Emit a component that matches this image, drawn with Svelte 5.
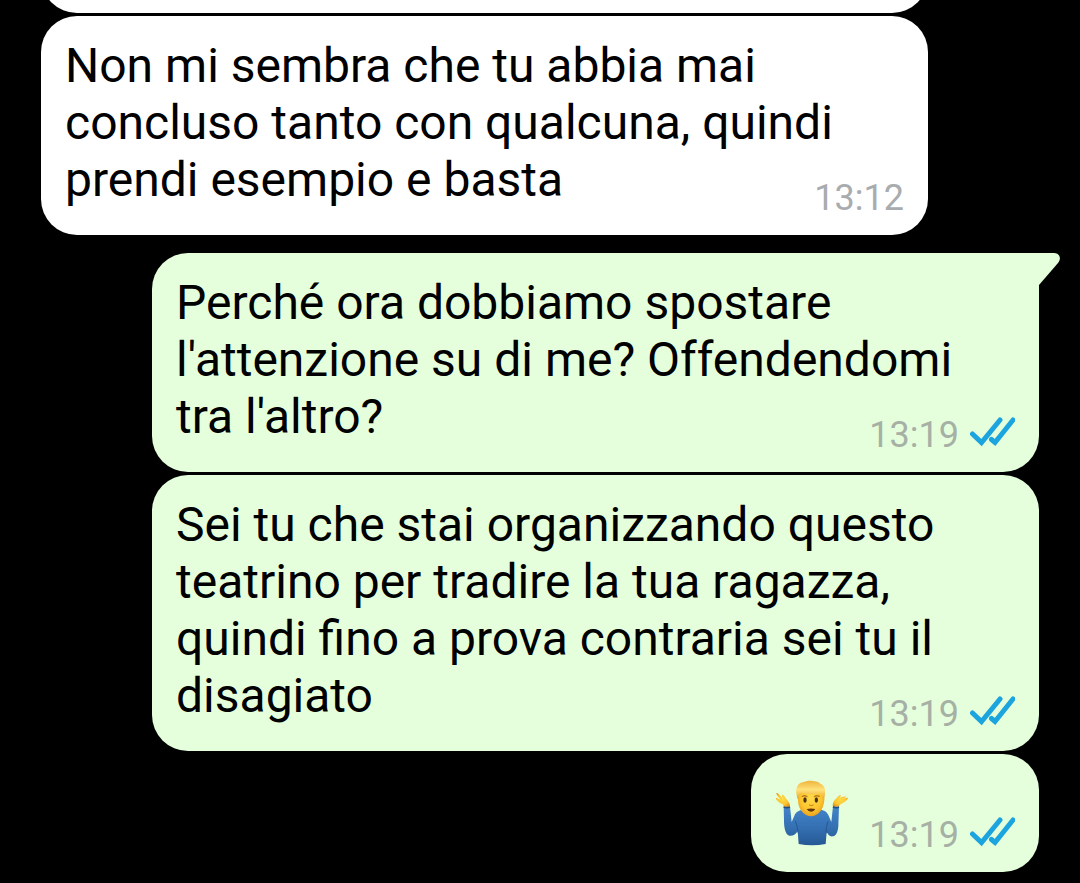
<script lang="ts">
    type Message = {
        text: string;
        time: string;
        mine: boolean;
        tail?: boolean;
        shrug?: boolean;
    };

    const messages: Message[] = [
        {
            text: "Non mi sembra che tu abbia mai concluso tanto con qualcuna, quindi prendi esempio e basta",
            time: "13:12",
            mine: false,
        },
        {
            text: "Perché ora dobbiamo spostare l'attenzione su di me? Offendendomi tra l'altro?",
            time: "13:19",
            mine: true,
            tail: true,
        },
        {
            text: "Sei tu che stai organizzando questo teatrino per tradire la tua ragazza, quindi fino a prova contraria sei tu il disagiato",
            time: "13:19",
            mine: true,
        },
        { text: "", time: "13:19", mine: true, shrug: true },
    ];
</script>

{#snippet meta(message: Message)}
    <span class="meta">
        <time>{message.time}</time>
        {#if message.mine}
            <svg class="ticks" viewBox="0 0 45 30" role="img" aria-label="Letto">
                <path d="M2.5 17L11.5 25.5L30 3M21.5 22.5L25 25.5L43 3" />
            </svg>
        {/if}
    </span>
{/snippet}

<main class="chat">
    <div class="previous">
        <div class="bubble"></div>
    </div>
    {#each messages as message}
        <article
            class="bubble"
            class:mine={message.mine}
            class:tailed={message.tail}
            class:compact={message.shrug}
        >
            {#if message.tail}
                <svg class="tail" viewBox="0 0 22 34" aria-hidden="true">
                    <path d="M0 0H15C20 0 23 5 19 10L0 32Z" />
                </svg>
            {/if}
            {#if message.shrug}
                <svg class="emoji" viewBox="42 42 222 198" role="img" aria-label="🤷‍♂️">
                    <defs>
                        <linearGradient id="shirt" x1="0" y1="0" x2="0" y2="1">
                            <stop offset="0" stop-color="#4384c9" />
                            <stop offset="0.55" stop-color="#3470b2" />
                            <stop offset="1" stop-color="#255894" />
                        </linearGradient>
                        <radialGradient id="skin" cx="0.5" cy="0.45" r="0.6">
                            <stop offset="0" stop-color="#ffdc48" />
                            <stop offset="0.65" stop-color="#fbc42d" />
                            <stop offset="1" stop-color="#e4941b" />
                        </radialGradient>
                        <linearGradient id="hair" x1="0" y1="0" x2="0" y2="1">
                            <stop offset="0" stop-color="#efb43a" />
                            <stop offset="0.5" stop-color="#ffe27a" />
                            <stop offset="1" stop-color="#e9a92e" />
                        </linearGradient>
                    </defs>
                    <path
                        fill="url(#skin)"
                        d="M68 122L66 115C57 112 50 106 45 99C43 95 47 95 52 98L58 101C52 93 46 86 46 82C48 79 53 84 58 89L66 97C63 92 61 87 64 86C69 86 72 93 76 99C82 105 86 112 87 118L86 123Z"
                    />
                    <path
                        fill="url(#skin)"
                        d="M233 122L236 116C246 112 254 107 260 99C262 95 258 94 251 97L244 98C250 95 255 94 254 92C250 90 240 93 233 98L239 91C241 87 236 87 232 91L221 102C217 107 215 114 215 121Z"
                    />
                    <path
                        fill="url(#shirt)"
                        d="M68 122Q77 126 87 122L92 168L102 145C109 134 121 131 138 130H168C185 131 197 136 202 147L211 168L216 121Q225 126 234 122L232 180C231 196 226 209 216 211C207 213 202 207 197 199L194 234Q153 242 113 234L110 196C103 207 93 211 85 209C73 205 69 186 69 164Z"
                    />
                    <path
                        fill="none"
                        stroke="#265791"
                        stroke-width="3"
                        d="M103 165Q110 182 112 202M201 166Q195 180 195 202"
                    />
                    <path
                        fill="none"
                        stroke="#244e80"
                        stroke-width="5"
                        d="M68 123Q77 127 87 123M216 122Q225 127 234 123"
                    />
                    <path
                        fill="url(#skin)"
                        d="M109 82Q109 51 151 50Q192 52 191 84L190 103C188 131 170 151 151 151C131 151 112 131 111 104Z"
                    />
                    <path
                        fill="url(#hair)"
                        d="M107 88C102 65 110 49 132 47C144 42 169 44 178 53C192 59 195 72 190 90L186 96C185 88 181 83 173 83C151 86 134 84 121 80C115 83 115 88 113 96L109 98Z"
                    />
                    <path
                        fill="none"
                        stroke="#bc7922"
                        stroke-width="4"
                        stroke-linecap="round"
                        d="M124 91Q132 87 138 92M160 92Q166 87 175 91"
                    />
                    <ellipse cx="132" cy="102" rx="5" ry="8" fill="#49301a" />
                    <ellipse cx="166" cy="102" rx="5" ry="8" fill="#49301a" />
                    <path
                        fill="none"
                        stroke="#d68e20"
                        stroke-width="4"
                        stroke-linecap="round"
                        d="M146 117Q151 121 156 117"
                    />
                    <path fill="#65350f" d="M137 129Q151 126 163 129Q158 138 150 137Q141 137 137 129Z" />
                </svg>
                {@render meta(message)}
            {:else}
                <p class="text">{message.text} {@render meta(message)}</p>
            {/if}
        </article>
    {/each}
</main>

<style>
    :global(body) {
        margin: 0;
        background: #000;
    }

    .chat {
        display: flex;
        flex-direction: column;
        gap: 3px;
        padding: 0 41px 11px;
        font-family: Roboto, sans-serif;
        color: #000;
    }

    .previous {
        display: flex;
        align-items: flex-end;
        height: 13px;
        overflow: hidden;
    }

    .previous .bubble {
        flex: 1;
        height: 80px;
    }

    .bubble {
        position: relative;
        box-sizing: border-box;
        margin-right: 111px;
        padding: 21px 24px;
        border-radius: 36px;
        background: #fff;
    }

    .mine {
        margin-right: 0;
        margin-left: 111px;
        background: #e5ffdc;
    }

    .tailed {
        margin-top: 15px;
        border-top-right-radius: 0;
    }

    .tail {
        position: absolute;
        top: 0;
        left: 100%;
        width: 22px;
        height: 34px;
        fill: #e5ffdc;
    }

    .compact {
        display: flex;
        align-self: flex-end;
        align-items: flex-end;
        gap: 20px;
        margin-left: 0;
        padding-top: 26px;
    }

    .text {
        display: flow-root;
        margin: 0;
        font-size: 48px;
        line-height: 57px;
    }

    .meta {
        display: flex;
        align-items: flex-start;
        gap: 11px;
        color: #a9acaf;
        font-size: 36px;
        line-height: 32px;
    }

    /* floats to the right end of the last line */
    .text .meta {
        float: right;
        margin-top: 31px;
    }

    .mine .meta {
        color: #a6b0a5;
    }

    .ticks {
        width: 45px;
        height: 30px;
        margin-top: -2px;
        fill: none;
        stroke: #1ca4de;
        stroke-width: 5;
        stroke-linecap: round;
        stroke-linejoin: miter;
    }

    .emoji {
        width: 74px;
        height: 66px;
        margin-bottom: 5px;
    }
</style>
